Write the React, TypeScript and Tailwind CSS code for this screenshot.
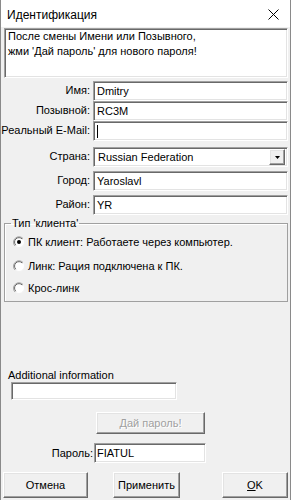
import React from "react";

const sunken =
  "bg-white border border-t-[#a0a0a0] border-l-[#a0a0a0] border-b-white border-r-white shadow-[inset_1px_1px_0_#696969,inset_-1px_-1px_0_#e3e3e3]";
const raised =
  "bg-[#f0f0f0] border border-t-white border-l-white border-b-[#696969] border-r-[#696969] shadow-[inset_-1px_-1px_0_#a0a0a0,inset_1px_1px_0_#e3e3e3]";

function Field({
  label,
  value,
  className = "",
  children,
}: {
  label: string;
  value?: string;
  className?: string;
  children?: React.ReactNode;
}) {
  return (
    <div className={`flex items-center h-[20px] ${className}`}>
      <div className="w-[89px] text-right pb-[3px] whitespace-nowrap">{label}</div>
      <div className={`ml-[3px] w-[195px] h-[20px] flex items-center pl-[3px] ${sunken}`}>
        {value}
        {children}
      </div>
    </div>
  );
}

function Radio({ label, checked, className = "" }: { label: string; checked?: boolean; className?: string }) {
  return (
    <div className={`flex items-center pl-[8px] ${className}`}>
      <svg width="12" height="12" viewBox="0 0 12 12">
        <circle cx="6" cy="6" r="5.5" fill="#fff" stroke="#f0f0f0" />
        <path d="M10 2.5 A5 5 0 0 0 2 10" fill="none" stroke="#a0a0a0" strokeWidth="1" />
        <path d="M9.2 3 A4 4 0 0 0 2.8 9.2" fill="none" stroke="#696969" strokeWidth="1" />
        {checked && <circle cx="6" cy="6" r="2" fill="#000" />}
      </svg>
      <span className="ml-[3px]">{label}</span>
    </div>
  );
}

export default function App() {
  return (
    <div className="w-[291px] h-[500px] bg-[#f0f0f0] border-l border-r border-[#8a8a8a] flex flex-col overflow-hidden text-[11px] leading-[14px] text-black font-['Liberation_Sans',Arial,sans-serif]">
      <div className="h-[27px] shrink-0 bg-white flex items-center justify-between pl-[6px] pr-[11px] pt-[2px] text-[12px]">
        <span>Идентификация</span>
        <svg width="11" height="11" viewBox="0 0 11 11">
          <path d="M0.5 0.5 L10.5 10.5 M10.5 0.5 L0.5 10.5" stroke="#000" strokeWidth="1" />
        </svg>
      </div>

      <div className={`ml-[3px] mt-[1px] w-[284px] h-[50px] shrink-0 px-[3px] ${sunken}`}>
        <div className="-mt-[2px] leading-[15px] pt-[2px]">
          После смены Имени или Позывного,
          <br />
          жми 'Дай пароль' для нового пароля!
        </div>
      </div>

      <Field label="Имя:" value="Dmitry" className="mt-[3px]" />
      <Field label="Позывной:" value="RC3M" />
      <Field label="Реальный E-Mail:">
        <div className="w-[1px] h-[13px] bg-black" />
      </Field>
      <div className="flex items-center h-[20px] mt-[6px]">
        <div className="w-[89px] text-right pb-[3px]">Страна:</div>
        <div className={`ml-[3px] w-[195px] h-[20px] flex items-center justify-between pl-[4px] pr-[2px] ${sunken}`}>
          <span>Russian Federation</span>
          <div className={`w-[16px] h-[16px] flex items-center justify-center ${raised}`}>
            <svg width="5" height="3" viewBox="0 0 5 3">
              <path d="M0 0 H5 L2.5 3 Z" fill="#000" />
            </svg>
          </div>
        </div>
      </div>
      <Field label="Город:" value="Yaroslavl" className="mt-[4px]" />
      <Field label="Район:" value="YR" className="mt-[4px]" />

      <fieldset className="ml-[3px] mt-[1px] w-[284px] border border-[#a0a0a0] shadow-[inset_1px_1px_0_#fff] pb-[3px]">
        <legend className="ml-[6px] px-[1px]">Тип 'клиента'</legend>
        <Radio label="ПК клиент: Работаете через компьютер." checked className="h-[24px]" />
        <Radio label="Линк: Рация подключена к ПК." className="h-[24px]" />
        <Radio label="Крос-линк" className="h-[20px]" />
      </fieldset>

      <div className="ml-[7px] mt-[66px]">Additional information</div>
      <div className={`ml-[10px] w-[166px] h-[18px] shrink-0 ${sunken}`} />

      <div
        className={`ml-[95px] mt-[12px] w-[109px] h-[22px] shrink-0 flex items-center justify-center text-[#a0a0a0] [text-shadow:1px_1px_0_#fff] ${raised}`}
      >
        Дай пароль!
      </div>

      <div className="flex items-center h-[20px] mt-[9px] shrink-0">
        <div className="w-[92px] text-right">Пароль:</div>
        <div className={`ml-[1px] w-[112px] h-[20px] flex items-center pl-[2px] ${sunken}`}>FIATUL</div>
      </div>

      <div className="flex mt-[9px] shrink-0">
        <div className={`ml-[2px] w-[85px] h-[26px] flex items-center justify-center ${raised}`}>Отмена</div>
        <div className={`ml-[25px] w-[67px] h-[26px] flex items-center justify-center ${raised}`}>Применить</div>
        <div className={`ml-[42px] w-[66px] h-[26px] flex items-center justify-center ${raised}`}>
          <span className="underline">O</span>K
        </div>
      </div>
    </div>
  );
}
